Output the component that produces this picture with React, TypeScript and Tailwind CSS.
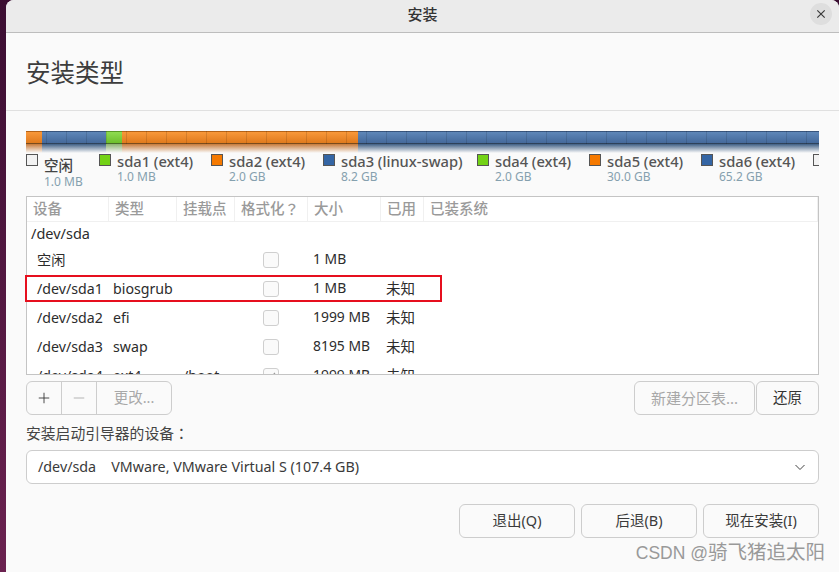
const FONT = "font-['Noto_Sans','Noto_Sans_CJK_SC',sans-serif]";
const TC = "font-['Noto_Sans_CJK_TC',sans-serif]";

const segments = [
  { w: 'w-[16px]', top: 'bg-gradient-to-b from-[#f8983a] to-[#e07a1c]', glow: 'from-[#c77a3a]' },
  { w: 'w-[64px]', top: 'bg-gradient-to-b from-[#5f87b8] to-[#44699b]', glow: 'from-[#3f5f85]' },
  { w: 'w-[16px]', top: 'bg-gradient-to-b from-[#8fdc50] to-[#6dbf2c]', glow: 'from-[#8ab070]' },
  { w: 'w-[236px]', top: 'bg-gradient-to-b from-[#f8983a] to-[#e07a1c]', glow: 'from-[#c77a3a]' },
  { w: 'flex-1', top: 'bg-gradient-to-b from-[#5f87b8] to-[#44699b]', glow: 'from-[#3f5f85]' },
];

const legend = [
  { name: 'sda1 (ext4)', size: '1.0 MB', c: 'bg-[#73d216]', w: 'w-[112px]' },
  { name: 'sda2 (ext4)', size: '2.0 GB', c: 'bg-[#f57900]', w: 'w-[112px]' },
  { name: 'sda3 (linux-swap)', size: '8.2 GB', c: 'bg-[#3465a4]', w: 'w-[154px]' },
  { name: 'sda4 (ext4)', size: '2.0 GB', c: 'bg-[#73d216]', w: 'w-[112px]' },
  { name: 'sda5 (ext4)', size: '30.0 GB', c: 'bg-[#f57900]', w: 'w-[112px]' },
  { name: 'sda6 (ext4)', size: '65.2 GB', c: 'bg-[#3465a4]', w: 'w-[112px]' },
];

const headers = [
  { t: '设备', w: 'w-[82px]' },
  { t: '类型', w: 'w-[68px]' },
  { t: '挂载点', w: 'w-[58px]' },
  { t: '格式化', q: true, w: 'w-[73px]' },
  { t: '大小', w: 'w-[73px]' },
  { t: '已用', w: 'w-[43px]' },
  { t: '已装系统', w: 'flex-1' },
];

const rows = [
  { d: '空闲', t: '', m: '', s: '1 MB', u: '' },
  { d: '/dev/sda1', t: 'biosgrub', m: '', s: '1 MB', u: '未知' },
  { d: '/dev/sda2', t: 'efi', m: '', s: '1999 MB', u: '未知' },
  { d: '/dev/sda3', t: 'swap', m: '', s: '8195 MB', u: '未知' },
  { d: '/dev/sda4', t: 'ext4', m: '/boot', s: '1999 MB', u: '未知', checked: true },
];

function Row({ r }: { r: (typeof rows)[number] }) {
  return (
    <div className="flex h-[29px] shrink-0 items-center text-[14.2px] text-[#2c2c2c]">
      <div className="w-[86px] whitespace-nowrap pl-[10px]">{r.d}</div>
      <div className="w-[70px] whitespace-nowrap">{r.t}</div>
      <div className="w-[66px] whitespace-nowrap">{r.m}</div>
      <div className="flex w-[64px] justify-center pr-[20px]">
        <div className="flex h-[16px] w-[16px] items-center justify-center rounded-[3px] border border-[#cfcfcf] bg-[#fafafa]">
          {r.checked && (
            <svg viewBox="0 0 16 16" className="h-[14px] w-[14px]">
              <path d="M3.5 8.5l3 3 6-7" fill="none" stroke="#999" strokeWidth="1.4" />
            </svg>
          )}
        </div>
      </div>
      <div className="w-[73px] whitespace-nowrap text-[13.9px]">{r.s}</div>
      <div className="whitespace-nowrap text-[14.5px]">{r.u}</div>
    </div>
  );
}

export default function App() {
  return (
    <div className={`flex h-[572px] w-[839px] overflow-hidden bg-gradient-to-b from-[#3b0e32] to-[#6b2250] ${FONT}`}>
      <div className="w-[6px] shrink-0" />
      <div className="relative flex min-w-0 flex-1 flex-col overflow-hidden rounded-t-[8px] bg-[#fafafa]">
        <header className="relative flex h-[33px] shrink-0 items-center justify-center border-b border-[#bdbdbd] bg-[#ebebeb] pb-[3px]">
          <span className="text-[15px] font-medium text-[#333]">安装</span>
          <button className="absolute right-[7px] top-[3px] flex h-[22px] w-[22px] items-center justify-center rounded-full bg-[#dedede]">
            <svg viewBox="0 0 16 16" className="h-[16px] w-[16px]">
              <path d="M4.3 4.3l7.4 7.4M11.7 4.3l-7.4 7.4" fill="none" stroke="#3a3a3a" strokeWidth="1.2" />
            </svg>
          </button>
        </header>

        <div className="flex h-[78px] shrink-0 items-center border-b border-[#e0e0e0] pl-[20px] pt-[3px]">
          <h1 className="text-[24.5px] font-normal leading-none text-[#3d3d3d]">安装类型</h1>
        </div>

        <div className="flex min-h-0 flex-1 flex-col px-[20px]">
          <div className="relative mt-[20px] flex h-[22px] w-[793px] shrink-0">
            {segments.map((s, i) => (
              <div key={i} className={`flex flex-col ${s.w}`}>
                <div className={`h-[13px] border-t border-b border-t-black/20 border-b-black/50 ${s.top}`} />
                <div className={`h-[9px] bg-gradient-to-b ${s.glow} to-transparent`} />
              </div>
            ))}
            <div className="absolute left-[1px] right-0 top-0 h-[13px] bg-[repeating-linear-gradient(90deg,transparent_0,transparent_19px,rgba(0,0,0,0.12)_19px,rgba(0,0,0,0.12)_20px)]" />
          </div>

          <div className="flex h-[43px] w-[793px] shrink-0 overflow-hidden">
            <div className="flex w-[73px] shrink-0">
              <div className="mt-[1px] h-[12px] w-[12px] border border-[#555] bg-[#f2f2f2]" />
              <div className="ml-[6px]">
                <div className="mt-[3px] text-[14.5px] font-medium leading-[18px] text-[#444]">空闲</div>
                <div className="text-[12px] leading-[16px] text-[#85a0ae]">1.0 MB</div>
              </div>
            </div>
            {legend.map((l) => (
              <div key={l.name} className={`flex shrink-0 ${l.w}`}>
                <div className={`mt-[1px] h-[12px] w-[12px] border border-[#555] ${l.c}`} />
                <div className="ml-[6px] whitespace-nowrap">
                  <div className="text-[14.7px] font-medium leading-[16px] text-[#555]">{l.name}</div>
                  <div className="text-[12px] leading-[15px] text-[#85a0ae]">{l.size}</div>
                </div>
              </div>
            ))}
            <div className="mt-[1px] h-[12px] w-[12px] shrink-0 border border-[#555] bg-[#f2f2f2]" />
          </div>

          <div className="flex h-[179px] w-[793px] shrink-0 flex-col overflow-hidden border border-[#c4c4c4] bg-white">
            <div className="flex h-[25px] shrink-0 items-center border-b border-[#f0f0f0] text-[14.5px] font-medium text-[#9a9a9a]">
              {headers.map((h) => (
                <div key={h.t} className={`flex h-full items-center whitespace-nowrap border-r border-[#f0f0f0] pl-[6px] ${h.w}`}>
                  {h.t}
                  {h.q && <span className={TC}>？</span>}
                </div>
              ))}
            </div>
            <div className="flex h-[23px] shrink-0 items-center pl-[4px] text-[14.5px] text-[#2c2c2c]">/dev/sda</div>
            {rows.map((r) => (
              <Row key={r.d} r={r} />
            ))}
          </div>

          <div className="mt-[6px] flex h-[34px] w-[793px] shrink-0 justify-between">
            <div className="flex h-full overflow-hidden rounded-[6px] border border-[#cdcdcd] bg-[#fafafa]">
              <div className="flex w-[35px] items-center justify-center border-r border-[#cdcdcd] text-[#333]">
                <svg viewBox="0 0 16 16" className="h-[14px] w-[14px]"><path d="M8 2v12M2 8h12" stroke="#333" strokeWidth="1" fill="none" /></svg>
              </div>
              <div className="flex w-[35px] items-center justify-center border-r border-[#cdcdcd]">
                <svg viewBox="0 0 16 16" className="h-[14px] w-[14px]"><path d="M2 8h12" stroke="#aaa" strokeWidth="1" fill="none" /></svg>
              </div>
              <div className="flex w-[74px] items-center justify-center text-[14.5px] text-[#a8a8a8]">更改...</div>
            </div>
            <div className="flex h-full gap-px">
              <div className="flex w-[121px] items-center justify-center rounded-[6px] border border-[#cdcdcd] text-[15px] text-[#a8a8a8]">新建分区表...</div>
              <div className="flex w-[63px] items-center justify-center rounded-[6px] border border-[#cdcdcd] text-[14.5px] text-[#333]">还原</div>
            </div>
          </div>

          <div className="mt-[8px] text-[14.8px] leading-[20px] text-[#444]">
            安装启动引导器的设备<span className={TC}>：</span>
          </div>

          <div className="mt-[7px] flex h-[34px] w-[793px] shrink-0 items-center justify-between rounded-[6px] border border-[#cdcdcd] bg-white pl-[11px] pr-[12px] text-[14.3px] text-[#3a3a3a]">
            <span className="whitespace-nowrap">/dev/sda<span className="ml-[15px]">VMware, VMware Virtual S (107.4 GB)</span></span>
            <svg viewBox="0 0 12 12" className="h-[12px] w-[12px]"><path d="M1.5 4l4.5 4.5L10.5 4" fill="none" stroke="#444" strokeWidth="1" /></svg>
          </div>

          <div className="mt-[20px] flex h-[34px] w-[793px] shrink-0 justify-end gap-[6px]">
            {['退出(Q)', '后退(B)', '现在安装(I)'].map((t) => (
              <div key={t} className="flex w-[116px] items-center justify-center rounded-[6px] border border-[#cdcdcd] text-[14.5px] text-[#3a3a3a]">{t}</div>
            ))}
          </div>
        </div>

        <div className="absolute bottom-[8px] right-[14px] whitespace-nowrap text-[19.5px] leading-[22px] text-[#999]">
          <span className="font-['Liberation_Sans',sans-serif] text-[17.5px]">CSDN @</span>骑飞猪追太阳
        </div>
        <div className="absolute left-[19px] top-[275px] h-[27px] w-[417px] border-2 border-[#e60f1e]" />
      </div>
    </div>
  );
}
